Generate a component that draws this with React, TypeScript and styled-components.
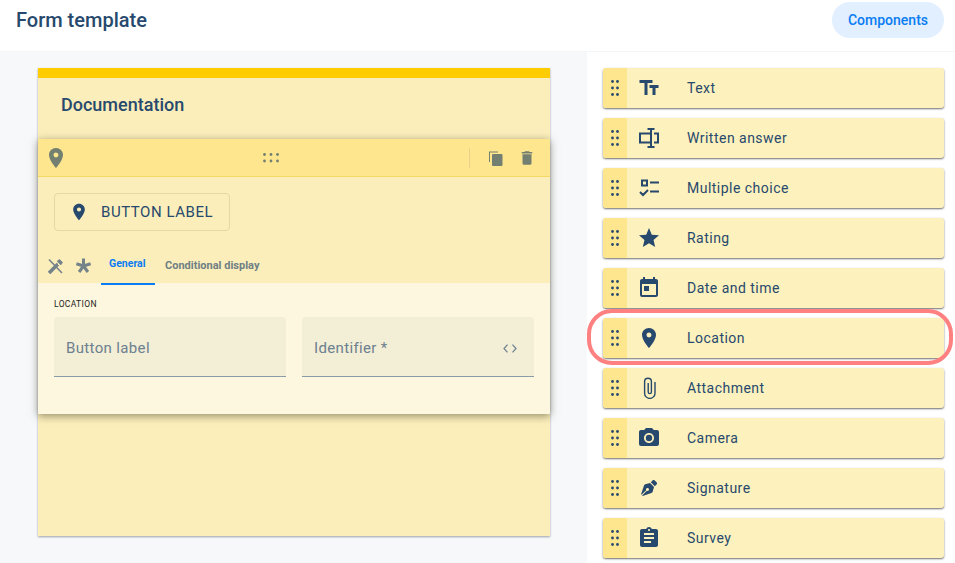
import React from "react";
import styled, { createGlobalStyle } from "styled-components";
import {
  MdTextFields, MdStar, MdToday, MdLocationOn, MdPhotoCamera,
  MdAssignment, MdDelete,
} from "react-icons/md";
import { FaPenNib } from "react-icons/fa";

const Global = createGlobalStyle`
  html, body { margin: 0; padding: 0; width: 955px; height: 563px; overflow: hidden; background: #fff; }
  body { font-family: Roboto, "Liberation Sans", sans-serif; color: #27496d; }
  * { box-sizing: border-box; }
`;

const Page = styled.div`
  width: 955px; height: 563px; display: flex; flex-direction: column; overflow: hidden;
`;
const Header = styled.header`
  height: 52px; flex: none; display: flex; align-items: flex-start; justify-content: space-between;
  padding: 2px 11px 0 16px; border-bottom: 1px solid #f4f5f7;
`;
const Title = styled.h1`
  margin: 8px 0 0; font-size: 20px; line-height: 20px; font-weight: 500; color: #27496d;
`;
const PillButton = styled.button`
  width: 112px; height: 36px; border: 0; border-radius: 18px; background: #e1effe; color: #0a7cf2;
  font: 500 14px Roboto, sans-serif; padding: 0;
`;
const Body = styled.div`flex: 1; display: flex; min-height: 0;`;
const Canvas = styled.main`
  width: 587px; flex: none; background: #f7f8fa; padding: 16px 37px 0 38px;
`;
const Sheet = styled.section`
  height: 468px; background: #fbeeba; border-top: 10px solid #ffcc00;
  box-shadow: 0 1px 2px rgba(40,50,70,.45);
`;
const SheetTitle = styled.h2`
  margin: 0; padding: 16px 23px 0; height: 61px; font-size: 18px; line-height: 22px; font-weight: 500; color: #27496d;
`;
const Editor = styled.div`
  height: 275px; background: #fdf7df; box-shadow: 0 2px 8px rgba(60,60,40,.55);
`;
const EditorBar = styled.div`
  height: 38px; background: #fee68e; border-bottom: 1px solid #f5d962; display: flex; align-items: center;
  padding: 0 14px 0 6px; color: #737f70;
`;
const BarDrag = styled.div`flex: 1; display: flex; justify-content: center; padding-left: 5px;`;
const BarDivider = styled.div`width: 1px; height: 20px; background: #e8d38a; margin-right: 18px;`;
const BarIcon = styled.span<{ $gap?: number }>`
  display: flex; margin-right: ${p => p.$gap ?? 0}px; color: #737f70;
`;
const EditorTop = styled.div`background: #fbeeba; height: 106px; display: flex; flex-direction: column;`;
const LabelRow = styled.div`padding: 16px 16px 0;`;
const PreviewButton = styled.div`
  width: 176px; height: 38px; border: 1px solid #e5d8a4; border-radius: 4px; display: flex; align-items: center;
  padding-left: 14px; gap: 12px; font-size: 15px; letter-spacing: .55px; color: #27496d;
`;
const TabRow = styled.div`margin-top: auto; height: 35px; display: flex; align-items: flex-start; padding-left: 9px; color: #74828a;`;
const TabIcon = styled.span<{ $w: number }>`width: ${p => p.$w}px; height: 32px; padding-top: 10px; display: flex;`;
const Tab = styled.div<{ $active?: boolean }>`
  font-size: ${p => (p.$active ? 10.5 : 11)}px; font-weight: 700; white-space: nowrap;
  height: 37px; line-height: 17px;
  padding: ${p => (p.$active ? "7px 8px 0" : "9px 8px 0 10px")};
  width: ${p => (p.$active ? "54px" : "auto")};
  color: ${p => (p.$active ? "#0a7cf2" : "#6f7f85")};
  border-bottom: 2px solid ${p => (p.$active ? "#0a7cf2" : "transparent")};
`;
const EditorBody = styled.div`padding: 15px 16px 0;`;
const SectionLabel = styled.div`font-size: 8.5px; line-height: 10px; letter-spacing: .35px; color: #222; padding-top: 1px; margin-bottom: 8px;`;
const Fields = styled.div`display: grid; grid-template-columns: 232px 232px; gap: 16px;`;
const Field = styled.div`
  height: 60px; background: #f3eed6; border-bottom: 1px solid #8a9ca8; border-radius: 4px 4px 0 0;
  display: flex; align-items: center; justify-content: space-between; padding: 2px 17px 0 12px;
  font-size: 15px; color: #6c8090; letter-spacing: .35px;
`;
const CodeMark = styled.svg`display: block; margin-top: 2px; flex: none;`;
const Side = styled.aside`
  flex: 1; padding: 16px 11px 0 16px; display: flex; flex-direction: column; gap: 10px;
`;
const Item = styled.div`
  position: relative; flex: none; height: 40px; display: flex; background: #fdf1bd; border-radius: 3px;
  box-shadow: 0 1px 2px rgba(50,50,50,.7);
  font-size: 14px; color: #27496d; letter-spacing: .48px;
`;
const Handle = styled.div`
  width: 24px; flex: none; background: #fee68e; border-radius: 3px 0 0 3px; display: flex; align-items: center; justify-content: center;
`;
const ItemIcon = styled.div`width: 60px; flex: none; display: flex; align-items: center; padding-left: 12px; color: #27496d;`;
const ItemLabel = styled.div`display: flex; align-items: center;`;
const Highlight = styled.div`
  position: absolute; left: -16px; right: -9px; top: -9px; bottom: -7px; border: 4px solid #ff8080; border-radius: 25px;
  pointer-events: none;
`;
const Grip = styled.svg`display: block; flex: none;`;
const Nudged = styled.span`display: flex; margin-left: -2px;`;
const Nudged2 = styled.span`display: flex; margin-left: 2px;`;
const Nudged3 = styled.span`display: flex; margin-left: 4px;`;

const VDots = () => (
  <Grip width="8" height="16" viewBox="0 0 8 16" fill="#27496d">
    {[1.5, 8, 14.5].map(y => [1.5, 6.5].map(x => <circle key={`${x}-${y}`} cx={x} cy={y} r="1.4" />))}
  </Grip>
);
const HDots = () => (
  <Grip width="16" height="10" viewBox="0 0 16 10" fill="#737f70">
    {[1.5, 8, 14.5].map(x => [1.5, 8].map(y => <circle key={`${x}-${y}`} cx={x} cy={y} r="1.4" />))}
  </Grip>
);
const WrittenIcon = () => (
  <svg width="20" height="20" viewBox="0 0 20 20" fill="none" stroke="#27496d" strokeWidth="2">
    <path d="M11 5.5H1v9h10M12 1v18M8.5 1h7M8.5 19h7M15 5.5h4v9h-4" />
  </svg>
);
const ChoiceIcon = () => (
  <svg width="20" height="20" viewBox="0 0 20 20" fill="none" stroke="#27496d" strokeWidth="2">
    <path d="M3 2.5h5v5H3zM11 4.5h9M11 13.5h9M1 14l3 3 5-5" />
  </svg>
);
const PaperClip = () => (
  <svg width="14" height="22" viewBox="0 0 14 22" fill="none" stroke="#27496d" strokeWidth="1.4">
    <path d="M12 5v11.2a5.2 5.2 0 0 1-10.4 0V4.6a3.4 3.4 0 0 1 6.8 0V15a1.6 1.6 0 0 1-3.2 0V6" />
  </svg>
);
const CopyIcon = () => (
  <svg width="16" height="16" viewBox="0 0 16 16" fill="#737f70">
    <path d="M1 1.5h9v1H2V12H1z" />
    <rect x="4" y="4" width="10.5" height="12" rx="1" />
  </svg>
);
const ToolsIcon = () => (
  <svg width="16" height="16" viewBox="0 0 16 16" fill="none" stroke="#74828a">
    <path d="M2 15 L11 6" strokeWidth="3.6" />
    <path d="M10 3.5l2.5-2 3 3-2 2.5" fill="#74828a" strokeWidth="1" />
    <path d="M2 1.5 L15 15" strokeWidth="1.6" />
    <path d="M11 6 L12.5 7.5" stroke="#fbeeba" strokeWidth="1" />
  </svg>
);
const AsteriskIcon = () => (
  <svg width="15" height="15" viewBox="0 0 15 15" fill="none" stroke="#74828a" strokeWidth="3">
    <path d="M7.5 8V0.5M7.5 8L14.6 5.7M7.5 8L11.9 14M7.5 8L3.1 14M7.5 8L0.4 5.7" />
  </svg>
);
const CodeIcon = () => (
  <CodeMark width="14" height="9" viewBox="0 0 14 9" fill="none" stroke="#6c8090" strokeWidth="1.2">
    <path d="M4.5 0.7 L1 4.5 4.5 8.3M9.5 0.7 L13 4.5 9.5 8.3" />
  </CodeMark>
);

const items: [string, React.ReactNode][] = [
  ["Text", <Nudged><MdTextFields size={24} /></Nudged>],
  ["Written answer", <WrittenIcon />],
  ["Multiple choice", <ChoiceIcon />],
  ["Rating", <Nudged><MdStar size={24} /></Nudged>],
  ["Date and time", <Nudged><MdToday size={24} /></Nudged>],
  ["Location", <Nudged><MdLocationOn size={24} /></Nudged>],
  ["Attachment", <Nudged3><PaperClip /></Nudged3>],
  ["Camera", <Nudged><MdPhotoCamera size={24} /></Nudged>],
  ["Signature", <Nudged2><FaPenNib size={16} /></Nudged2>],
  ["Survey", <Nudged><MdAssignment size={24} /></Nudged>],
];

export default function App() {
  return (
    <Page>
      <Global />
      <Header>
        <Title>Form template</Title>
        <PillButton>Components</PillButton>
      </Header>
      <Body>
        <Canvas>
          <Sheet>
            <SheetTitle>Documentation</SheetTitle>
            <Editor>
              <EditorBar>
                <BarIcon><MdLocationOn size={24} /></BarIcon>
                <BarDrag><HDots /></BarDrag>
                <BarDivider />
                <BarIcon $gap={14}><CopyIcon /></BarIcon>
                <BarIcon><MdDelete size={18} /></BarIcon>
              </EditorBar>
              <EditorTop>
                <LabelRow>
                  <PreviewButton><MdLocationOn size={20} />BUTTON LABEL</PreviewButton>
                </LabelRow>
                <TabRow>
                  <TabIcon $w={29}><ToolsIcon /></TabIcon>
                  <TabIcon $w={25}><AsteriskIcon /></TabIcon>
                  <Tab $active>General</Tab>
                  <Tab>Conditional display</Tab>
                </TabRow>
              </EditorTop>
              <EditorBody>
                <SectionLabel>LOCATION</SectionLabel>
                <Fields>
                  <Field>Button label</Field>
                  <Field>Identifier *<CodeIcon /></Field>
                </Fields>
              </EditorBody>
            </Editor>
          </Sheet>
        </Canvas>
        <Side>
          {items.map(([label, icon]) => (
            <Item key={label}>
              <Handle><VDots /></Handle>
              <ItemIcon>{icon}</ItemIcon>
              <ItemLabel>{label}</ItemLabel>
              {label === "Location" && <Highlight />}
            </Item>
          ))}
        </Side>
      </Body>
    </Page>
  );
}
